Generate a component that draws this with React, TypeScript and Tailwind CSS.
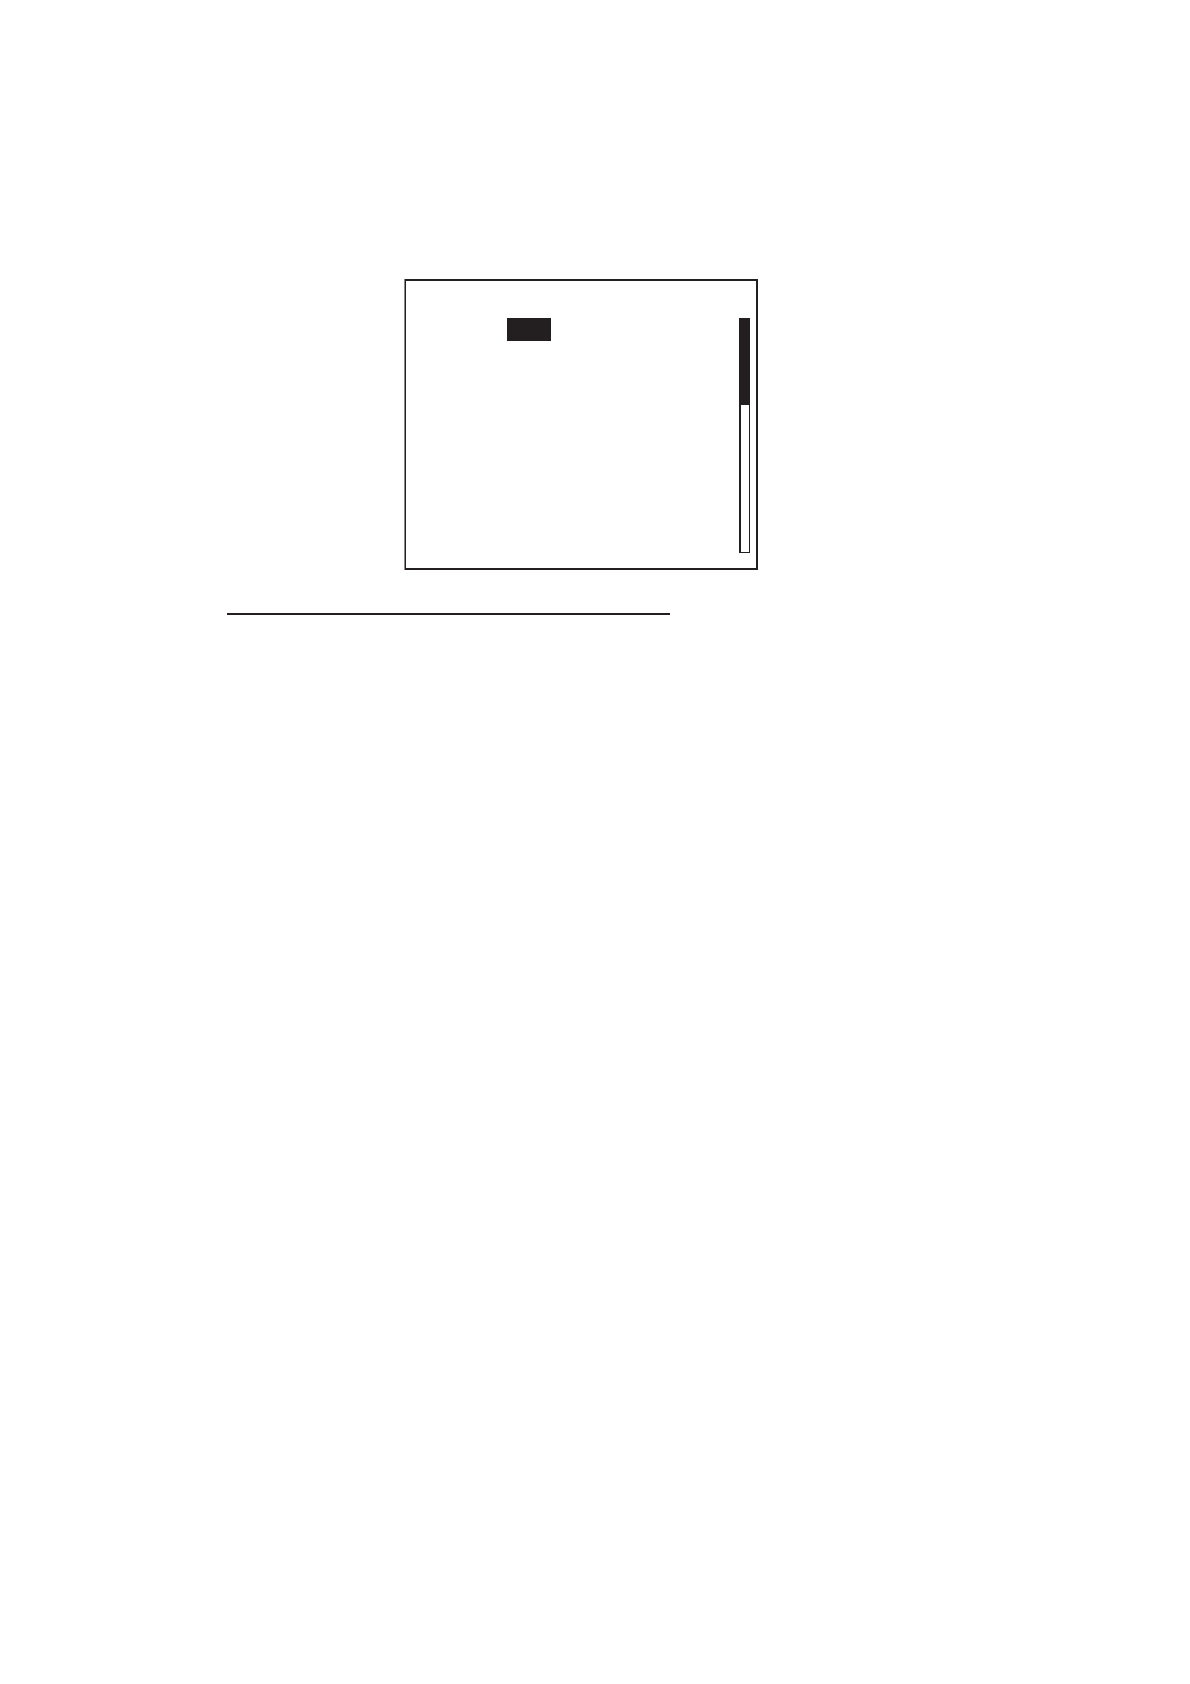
import React from 'react';

const scroll = { position: 0, visible: 37 };

function ScrollBar() {
  return (
    <div
      role="scrollbar"
      aria-label="Menu list"
      aria-controls="menu-list"
      aria-orientation="vertical"
      aria-valuenow={scroll.position}
      className="w-[11px] border-t border-r border-b border-l-2 border-[#231f20] bg-white"
    >
      <div className="bg-[#231f20]" style={{ height: `${scroll.visible}%` }} />
    </div>
  );
}

function DisplayPanel() {
  return (
    <section className="w-full max-w-[354px] border-l border-[#8a8889]">
      <div className="flex min-h-[291px] justify-between border-y-2 border-r-2 border-l border-[#231f20] pt-[37px] pr-1.5 pb-[15px] pl-[101px]">
        <div id="menu-list">
          <div className="h-[23px] w-11 bg-[#231f20]" />
        </div>
        <ScrollBar />
      </div>
    </section>
  );
}

export default function App() {
  return (
    <main className="min-h-screen bg-white pt-[279px] pr-8 pl-[227px]">
      <div className="pl-[177px]">
        <DisplayPanel />
      </div>
      <hr className="mt-[43px] w-full max-w-[443px] border-t-2 border-[#231f20]" />
    </main>
  );
}
